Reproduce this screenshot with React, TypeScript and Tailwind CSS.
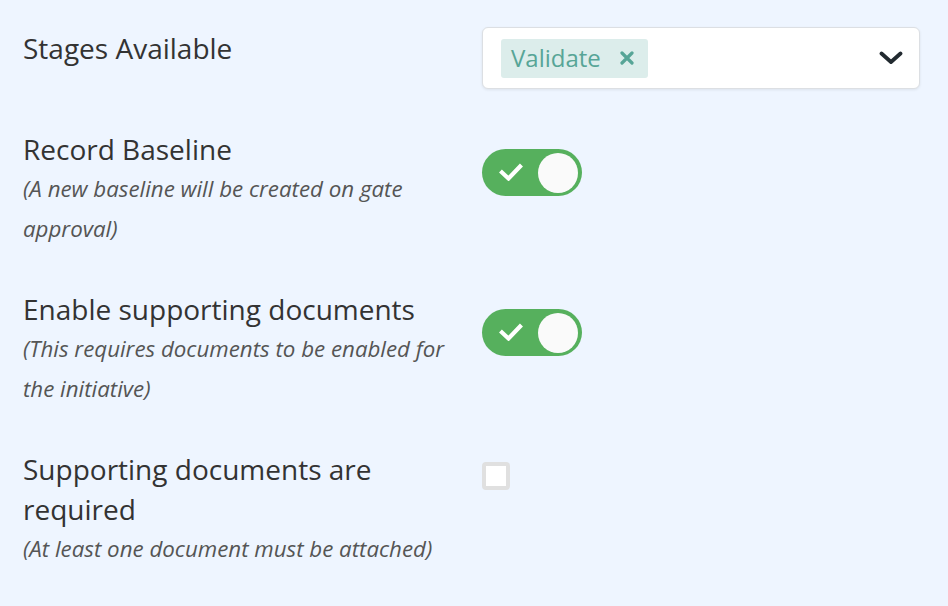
import { ReactNode } from "react";

function Toggle({ on }: { on: boolean }) {
  return (
    <div
      className={`relative mt-[20px] flex h-[47px] w-[100px] items-center rounded-full px-[4px] ${
        on ? "justify-end bg-[#56b05d]" : "justify-start bg-[#d5d5d5]"
      }`}
    >
      {on && (
        <svg viewBox="0 0 24 18" className="absolute left-[17px] top-[14px] h-[18px] w-[24px]">
          <path d="M3 9.5 L9.5 15.5 L21 3.5" fill="none" stroke="#fff" strokeWidth="4.2" strokeLinecap="square" />
        </svg>
      )}
      <div className="h-[40px] w-[40px] rounded-full bg-[#fafafa]" />
    </div>
  );
}

function Row({ label, hint, children }: { label: ReactNode; hint?: ReactNode; children: ReactNode }) {
  return (
    <div className="flex gap-[23px]">
      <div className="w-[436px] shrink-0">
        <div className="text-[28px] leading-[40px] text-[#333333]">{label}</div>
        {hint && <div className="text-[22.3px] italic leading-[40px] text-[#555555]">{hint}</div>}
      </div>
      <div className="flex-1">{children}</div>
    </div>
  );
}

export default function App() {
  return (
    <div
      className="min-h-[606px] w-full bg-[#eef5ff] pl-[23px] pr-[28px] pt-[27px]"
      style={{ fontFamily: '"Open Sans", sans-serif' }}
    >
      <div className="flex flex-col gap-[40px]">
        <div className="flex gap-[23px]">
          <div className="w-[436px] shrink-0 pt-px text-[28px] leading-[40px] text-[#333333]">Stages Available</div>
          <div className="flex h-[62px] flex-1 items-center justify-between rounded-[6px] border border-[#dcdfe3] bg-white pl-[18px] pr-[16px] shadow-[0_1px_3px_rgba(0,0,0,0.08)]">
            <span className="flex h-[39px] items-center gap-[19px] rounded-[3px] bg-[#dcedeb] pl-[10px] pr-[14px] text-[24px] text-[#57a597]">
              Validate
              <svg viewBox="0 0 14 14" className="h-[14px] w-[14px]">
                <path d="M2 2 L12 12 M12 2 L2 12" stroke="#57a597" strokeWidth="3.2" strokeLinecap="round" />
              </svg>
            </span>
            <svg viewBox="0 0 24 14" className="h-[14px] w-[24px]">
              <path d="M2.5 2.5 L12 11 L21.5 2.5" fill="none" stroke="#222a30" strokeWidth="3.8" strokeLinecap="round" strokeLinejoin="round" />
            </svg>
          </div>
        </div>

        <Row label="Record Baseline" hint="(A new baseline will be created on gate approval)">
          <Toggle on />
        </Row>

        <Row label="Enable supporting documents" hint="(This requires documents to be enabled for the initiative)">
          <Toggle on />
        </Row>

        <Row label="Supporting documents are required" hint="(At least one document must be attached)">
          <div className="mt-[13px] h-[28px] w-[28px] rounded-[4px] border-[4px] border-[#e0e0e0] bg-white" />
        </Row>
      </div>
    </div>
  );
}
